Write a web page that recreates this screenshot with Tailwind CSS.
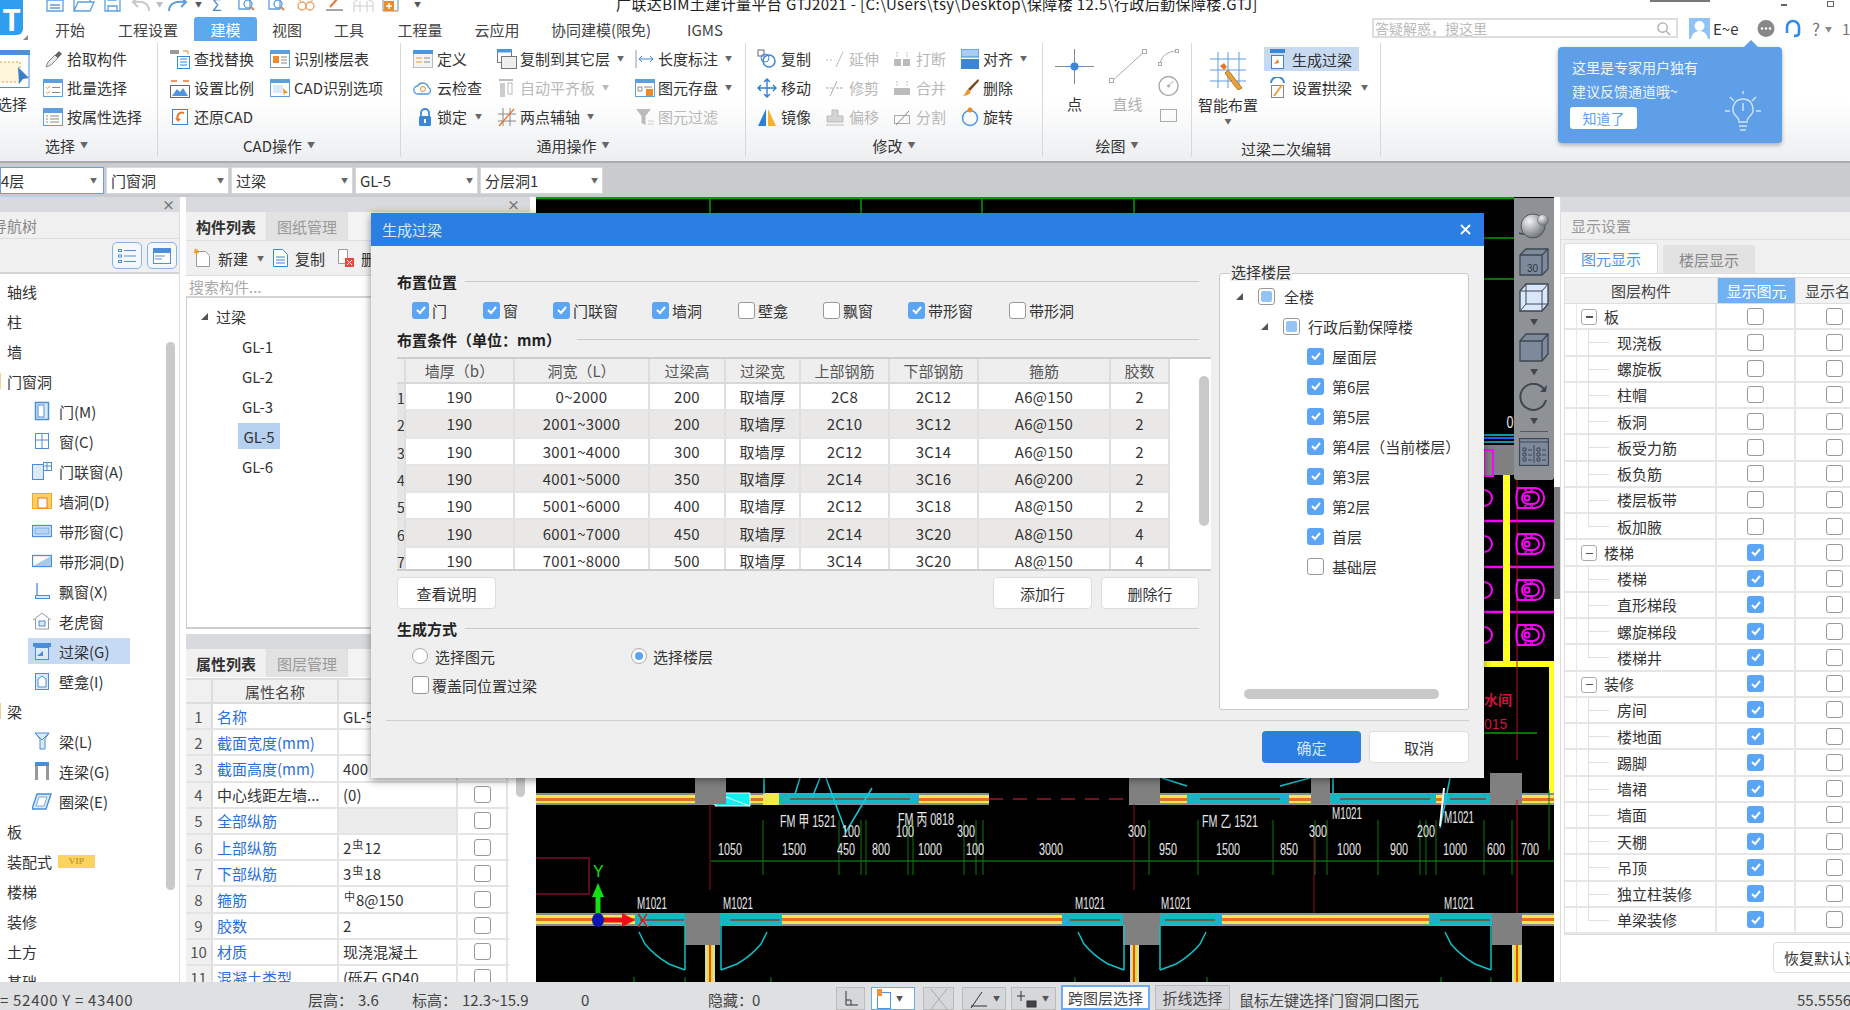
<!DOCTYPE html>
<html lang="zh-CN">
<head>
<meta charset="UTF-8">
<title>广联达BIM土建计量平台 GTJ2021</title>
<script src="https://cdn.jsdelivr.net/npm/@tailwindcss/browser@4"></script>
</head>
<body class="bg-white">
<div class="relative w-[1850px] h-[1010px] overflow-hidden flex flex-col text-[15px] leading-none text-[#333] font-['Noto_Sans_CJK_SC','Noto_Sans',sans-serif]">

  <!-- title bar, cut off at the top of the shot -->
  <div class="relative h-[17px] shrink-0 overflow-hidden bg-white">
    <div class="absolute left-[46px] -top-[4px] flex items-center whitespace-nowrap">
      <svg class="w-[18px] h-[16px]" viewBox="0 0 18 16" fill="none" stroke="#5c9ede" stroke-width="1.300"><path d="M1 0v15h16V0M1 4h16M4 9h10M4 12h10"/></svg>
      <svg class="w-[22px] h-[16px] ml-[9px]" viewBox="0 0 22 16" fill="none" stroke="#5c9ede" stroke-width="1.300"><path d="M1 15V1h6l2 2h8v3M1 15l4-9h16l-4 9z"/></svg>
      <svg class="w-[17px] h-[16px] ml-[9px]" viewBox="0 0 17 16" fill="none" stroke="#5c9ede" stroke-width="1.300"><path d="M1 0v15h15V3l-3-3M4 15v-5h9v5M4 0v4h8V0"/></svg>
      <svg class="w-[19px] h-[14px] ml-[10px]" viewBox="0 0 19 14" fill="none" stroke="#c8c8c8" stroke-width="2"><path d="M18 14C18 6 12 4 3 5M7 0L2 5l5 5"/></svg>
      <span class="text-[7px] text-[#bbb] ml-[6px]">▼</span>
      <svg class="w-[21px] h-[14px] ml-[5px]" viewBox="0 0 21 14" fill="none" stroke="#5c9ede" stroke-width="2"><path d="M1 14C1 6 8 4 17 5M13 0l5 5-5 5"/></svg>
      <span class="text-[7px] text-[#555] ml-[6px]">▼</span>
      <span class="ml-[10px] text-[16px] text-[#4a8ad0] w-[15px]">Σ</span>
      <svg class="w-[20px] h-[16px] ml-[10px]" viewBox="0 0 20 16" fill="none"><path d="M2 0v13h11V0" stroke="#5c9ede" stroke-width="1.300"/><circle cx="11" cy="8" r="4" stroke="#5c9ede" stroke-width="1.300"/><path d="M14 11l3 3" stroke="#e88040" stroke-width="2"/></svg>
      <svg class="w-[20px] h-[16px] ml-[10px]" viewBox="0 0 20 16" fill="none"><path d="M2 0v13h11V0" stroke="#5c9ede" stroke-width="1.300"/><circle cx="11" cy="8" r="4" stroke="#5c9ede" stroke-width="1.300"/><path d="M14 11l3 3" stroke="#e88040" stroke-width="2"/></svg>
      <svg class="w-[18px] h-[16px] ml-[10px]" viewBox="0 0 18 16" fill="none" stroke="#e8a060" stroke-width="1.300"><circle cx="5" cy="10" r="4"/><circle cx="13" cy="10" r="4"/><path d="M9 9h0M3 5V1M15 5V1"/></svg>
      <svg class="w-[17px] h-[16px] ml-[11px]" viewBox="0 0 17 16" fill="none"><path d="M4 11L13 1" stroke="#e8762a" stroke-width="2"/><path d="M0 14h17" stroke="#888" stroke-width="1.500"/></svg>
      <svg class="w-[21px] h-[15px] ml-[10px]" viewBox="0 0 21 15" fill="none" stroke="#ccc"><path d="M1 15V5l9-5 10 5v10M1 9h19M7 4v11M14 4v11"/></svg>
      <svg class="w-[17px] h-[16px] ml-[8px]" viewBox="0 0 17 16"><path d="M1 0v15h15V0" fill="#fff" stroke="#888"/><rect x="2" y="5" width="10" height="10" fill="#f08a28"/><path d="M7 7v6M4 10h6" stroke="#fff" stroke-width="1.500"/></svg>
      <span class="text-[7px] text-[#555] ml-[15px]">▼</span>
    </div>
    <div class="absolute left-[616px] -top-[4px] whitespace-nowrap text-[#222] tracking-[0.4px]">广联达BIM土建计量平台 GTJ2021 - [C:\Users\tsy\Desktop\保障楼 12.5\行政后勤保障楼.GTJ]</div>
    <div class="absolute left-[1650px] top-0 w-[60px] h-[2px] bg-[#777]"></div>
    <div class="absolute left-[1781px] top-[4px] w-[6px] h-[2px] bg-[#666]"></div>
    <div class="absolute left-[1827px] top-[1px] w-[7px] h-[6px] border border-[#666]"></div>
  </div>

  <!-- ribbon tabs -->
  <div class="relative h-[24px] shrink-0 flex items-stretch bg-white">
    <div class="w-[46px]"></div>
    <div class="w-[48px] flex items-center justify-center text-[#444]">开始</div>
    <div class="w-[100px] flex items-center justify-center text-[#444] translate-x-[4px]">工程设置</div>
    <div class="w-[63px] flex items-center justify-center bg-[#5ea8ee] rounded-t-[3px] text-white">建模</div>
    <div class="w-[60px] flex items-center justify-center text-[#444]">视图</div>
    <div class="w-[64px] flex items-center justify-center text-[#444]">工具</div>
    <div class="w-[78px] flex items-center justify-center text-[#444]">工程量</div>
    <div class="w-[76px] flex items-center justify-center text-[#444]">云应用</div>
    <div class="w-[132px] flex items-center justify-center text-[#444]">协同建模(限免)</div>
    <div class="w-[76px] flex items-center justify-center text-[#444]">IGMS</div>

    <div class="absolute left-[1372px] top-[1px] w-[306px] h-[20px] border-2 border-[#ddd] bg-white flex items-center pl-[1px] text-[14px] text-[#bbb]">答疑解惑，搜这里
      <svg class="absolute right-[5px] top-[1px] w-[15px] h-[15px]" viewBox="0 0 16 16" fill="none" stroke="#aaa" stroke-width="1.400"><circle cx="7" cy="7" r="5"/><path d="M11 11l4 4"/></svg>
    </div>
    <svg class="absolute left-[1689px] top-[1px] w-[21px] h-[21px]" viewBox="0 0 21 21"><rect width="21" height="21" fill="#8fc3f5"/><circle cx="10.500" cy="8" r="5" fill="#fff"/><path d="M2 21c1-6 5-8 8.500-8s7.500 2 8.500 8z" fill="#fff"/></svg>
    <div class="absolute left-[1713px] top-[4px] text-[#333]">E~e</div>
    <svg class="absolute left-[1757px] top-[3px] w-[18px] h-[18px]" viewBox="0 0 18 18"><circle cx="9" cy="8.500" r="8.500" fill="#888"/><circle cx="5" cy="8.500" r="1.200" fill="#fff"/><circle cx="9" cy="8.500" r="1.200" fill="#fff"/><circle cx="13" cy="8.500" r="1.200" fill="#fff"/></svg>
    <svg class="absolute left-[1784px] top-[2px] w-[18px] h-[20px]" viewBox="0 0 18 20" fill="none" stroke="#2d8cee" stroke-width="2.600"><path d="M3 14V8a6 6 0 0 1 12 0v6c0 2-2 3-5 3"/></svg>
    <div class="absolute left-[1812px] top-[3px] text-[#777] text-[17px]">?</div>
    <div class="absolute left-[1825px] top-[9px] text-[#888] text-[7px]">▼</div>
    <div class="absolute left-[1842px] top-[4px] text-[#777]">1</div>
  </div>

  <!-- ribbon -->
  <div class="h-[122px] shrink-0 flex border-b-2 border-[#a9abad] bg-gradient-to-b from-white via-white to-[#eceef0]">

    <div class="w-[158px] flex flex-col border-r border-[#d8d8d8] mb-[4px] mt-[2px]">
      <div class="h-[90px] pt-[1px] flex">
        <div class="w-[43px] flex flex-col">
          <svg class="w-[30px] h-[38px] mt-[6px]" viewBox="0 0 30 38"><rect x="-3" y="0.500" width="32" height="37" fill="#fff" stroke="#4a90dc"/><rect x="-3" y="0" width="33" height="5" fill="#4a90dc"/><path d="M0 12h20v20H0" fill="#fff6dc" stroke="#f0a020" stroke-dasharray="2 2"/><path d="M18 17l11 11-6 1-4 5z" fill="#3c7fc8"/></svg>
          <div class="mt-[8px] -ml-[3px] whitespace-nowrap">选择</div>
        </div>
        <div class="flex flex-col">
          <div class="flex items-center h-[29px] gap-[4px]"><svg class="w-5 h-5" viewBox="0 0 20 20"><path d="M3 18l2-5 7-7 3 3-7 7z" fill="#e8e8e8" stroke="#888"/><path d="M12 6l4-4 3 3-4 4z" fill="#666"/></svg>拾取构件</div>
          <div class="flex items-center h-[29px] gap-[4px]"><svg class="w-5 h-5" viewBox="0 0 20 20"><rect x="0.500" y="1.500" width="19" height="17" fill="#fff" stroke="#5c9ede"/><rect y="1" width="20" height="4" fill="#5c9ede"/><path d="M3 9l1.500 1.500L7 8M3 14l1.500 1.500L7 13" fill="none" stroke="#e99a2a"/><path d="M9 9.500h8M9 14.500h8" stroke="#888"/></svg>批量选择</div>
          <div class="flex items-center h-[29px] gap-[4px]"><svg class="w-5 h-5" viewBox="0 0 20 20"><rect x="0.500" y="1.500" width="19" height="17" fill="#fff" stroke="#5c9ede"/><rect y="1" width="20" height="5" fill="#5c9ede"/><path d="M3 9h2M7 9h9M3 12h2M7 12h9M3 15h2M7 15h9" stroke="#888"/></svg>按属性选择</div>
        </div>
      </div>
      <div class="flex-1 flex items-center justify-center gap-[5px] -translate-x-[12px]">选择<span class="text-[8px] text-[#666]">▼</span></div>
    </div>

    <div class="w-[243px] flex flex-col border-r border-[#d8d8d8] mb-[4px] mt-[2px]">
      <div class="h-[90px] pt-[1px] pl-[12px] flex">
        <div class="w-[100px] flex flex-col">
          <div class="flex items-center h-[29px] gap-[4px]"><svg class="w-5 h-5" viewBox="0 0 20 20"><rect y="1" width="9" height="4" fill="#999"/><rect x="7.500" y="7.500" width="12" height="12" fill="#fff" stroke="#3c86d6"/><path d="M10 10h7M10 13h7M10 16h7" stroke="#3c86d6"/><path d="M13 2h5v3" fill="none" stroke="#e8862a"/></svg>查找替换</div>
          <div class="flex items-center h-[29px] gap-[4px]"><svg class="w-5 h-5" viewBox="0 0 20 20"><path d="M1 3h6M13 3h6" stroke="#e8762a" stroke-width="1.500"/><rect x="0.500" y="7.500" width="19" height="12" fill="#fff" stroke="#666"/><path d="M2 18l5-7 3 3 3-4 5 8z" fill="#4c94dc"/></svg>设置比例</div>
          <div class="flex items-center h-[29px] gap-[4px]"><svg class="w-5 h-5" viewBox="0 0 20 20"><rect x="2.500" y="2.500" width="15" height="15" fill="#fff" stroke="#3c86d6"/><path d="M14 6c-4-2-8 2-6 7" fill="none" stroke="#e8762a" stroke-width="2"/><path d="M5 11l3 4 3-3z" fill="#e8762a"/></svg>还原CAD</div>
        </div>
        <div class="flex flex-col">
          <div class="flex items-center h-[29px] gap-[4px]"><svg class="w-5 h-5" viewBox="0 0 20 20"><rect x="0.500" y="1.500" width="19" height="17" fill="#fff" stroke="#5c9ede"/><rect y="1" width="20" height="4" fill="#5c9ede"/><rect x="3" y="7" width="6" height="7" fill="#f08a28"/><path d="M11 8h6M11 11h6M11 14h6" stroke="#888"/></svg>识别楼层表</div>
          <div class="flex items-center h-[29px] gap-[4px]"><svg class="w-5 h-5" viewBox="0 0 20 20"><rect x="0.500" y="1.500" width="19" height="17" fill="#fff" stroke="#5c9ede"/><rect y="1" width="20" height="4" fill="#5c9ede"/><rect x="3" y="7" width="10" height="8" fill="#dce9f8"/><path d="M13 10l5 5-3 0-1 3z" fill="#f08a28"/></svg>CAD识别选项</div>
        </div>
      </div>
      <div class="flex-1 flex items-center justify-center gap-[5px]">CAD操作<span class="text-[8px] text-[#666]">▼</span></div>
    </div>

    <div class="w-[345px] flex flex-col border-r border-[#d8d8d8] mb-[4px] mt-[2px]">
      <div class="h-[90px] pt-[1px] pl-[12px] flex">
        <div class="w-[84px] flex flex-col">
          <div class="flex items-center h-[29px] gap-[4px]"><svg class="w-5 h-5" viewBox="0 0 20 20"><rect x="0.500" y="1.500" width="19" height="17" fill="#f4f4f4" stroke="#bbb"/><rect y="1" width="20" height="4" fill="#4a96e0"/><path d="M3 9h6M3 13h6" stroke="#e8a040"/><path d="M11 9h6M11 13h6" stroke="#888"/></svg>定义</div>
          <div class="flex items-center h-[29px] gap-[4px]"><svg class="w-5 h-5" viewBox="0 0 20 20"><path d="M5 16a4 4 0 0 1-.5-8 6 6 0 0 1 11 1.500A3.500 3.500 0 0 1 15 16z" fill="#fff" stroke="#4a96e0" stroke-width="1.300"/><circle cx="10" cy="11" r="2.500" fill="none" stroke="#e8862a"/></svg>云检查</div>
          <div class="flex items-center h-[29px] gap-[4px]"><svg class="w-5 h-5 ml-[2px]" viewBox="0 0 20 20"><path d="M6 9V6a4 4 0 0 1 8 0v3" fill="none" stroke="#3c86d6" stroke-width="1.800"/><rect x="4" y="9" width="12" height="10" rx="1.500" fill="#3c86d6"/><rect x="9" y="12" width="2" height="4" fill="#fff"/></svg><span class="-ml-[2px]">锁定</span><span class="text-[7px] text-[#666] ml-[4px]">▼</span></div>
        </div>
        <div class="w-[138px] flex flex-col">
          <div class="flex items-center h-[29px] gap-[3px]"><svg class="w-5 h-5" viewBox="0 0 20 20"><rect x="0.500" y="0.500" width="14" height="13" fill="#fff" stroke="#777"/><rect width="15" height="3.500" fill="#4a96e0"/><rect x="4.500" y="7.500" width="15" height="12" fill="#eee" stroke="#777"/></svg>复制到其它层<span class="text-[7px] text-[#666] ml-[4px]">▼</span></div>
          <div class="flex items-center h-[29px] gap-[3px] text-[#b8b8b8]"><svg class="w-5 h-5" viewBox="0 0 20 20"><path d="M2 2h14" stroke="#bbb" stroke-width="2"/><rect x="3" y="5" width="5" height="14" fill="#ccc"/><rect x="11" y="5" width="4" height="11" fill="none" stroke="#bbb"/></svg>自动平齐板<span class="text-[7px] ml-[4px]">▼</span></div>
          <div class="flex items-center h-[29px] gap-[3px]"><svg class="w-5 h-5" viewBox="0 0 20 20" fill="none"><path d="M6 1v18M13 1v18M1 7h18M1 14h18" stroke="#888"/><path d="M2 19L17 2" stroke="#e8762a" stroke-width="1.300"/></svg>两点辅轴<span class="text-[7px] text-[#666] ml-[4px]">▼</span></div>
        </div>
        <div class="flex flex-col">
          <div class="flex items-center h-[29px] gap-[3px]"><svg class="w-5 h-5" viewBox="0 0 20 20" fill="none"><path d="M1 1v18" stroke="#999"/><path d="M5 10h12" stroke="#3c86d6"/><path d="M7 7l-3 3 3 3M15 7l3 3-3 3" stroke="#3c86d6"/></svg>长度标注<span class="text-[7px] text-[#666] ml-[4px]">▼</span></div>
          <div class="flex items-center h-[29px] gap-[3px]"><svg class="w-5 h-5" viewBox="0 0 20 20"><rect x="0.500" y="1.500" width="19" height="17" fill="#fff" stroke="#5c9ede"/><rect y="1" width="20" height="4" fill="#5c9ede"/><path d="M3 9h4v4H3zM9 9h8" fill="none" stroke="#888"/><rect x="11" y="11" width="7" height="7" fill="#f08a28"/></svg>图元存盘<span class="text-[7px] text-[#666] ml-[4px]">▼</span></div>
          <div class="flex items-center h-[29px] gap-[3px] text-[#b8b8b8]"><svg class="w-5 h-5" viewBox="0 0 20 20"><path d="M1 2h15l-5.500 7v9l-4-2V9z" fill="#bbb"/><path d="M13 14h6M13 17h6" stroke="#ccc"/></svg>图元过滤</div>
        </div>
      </div>
      <div class="flex-1 flex items-center justify-center gap-[5px]">通用操作<span class="text-[8px] text-[#666]">▼</span></div>
    </div>

    <div class="w-[297px] flex flex-col border-r border-[#d8d8d8] mb-[4px] mt-[2px]">
      <div class="h-[90px] pt-[1px] pl-[11px] flex">
        <div class="w-[68px] flex flex-col">
          <div class="flex items-center h-[29px] gap-[4px]"><svg class="w-5 h-5" viewBox="0 0 20 20" fill="none"><rect x="1" y="1" width="6" height="6" stroke="#666"/><circle cx="12" cy="12" r="6" stroke="#3c86d6" stroke-width="1.500"/><circle cx="8" cy="9" r="4" stroke="#3c86d6"/></svg>复制</div>
          <div class="flex items-center h-[29px] gap-[4px]"><svg class="w-5 h-5" viewBox="0 0 20 20" fill="none" stroke="#2f7fd4" stroke-width="1.400"><path d="M10 1v18M1 10h18M7 4l3-3 3 3M7 16l3 3 3-3M4 7l-3 3 3 3M16 7l3 3-3 3"/></svg>移动</div>
          <div class="flex items-center h-[29px] gap-[4px]"><svg class="w-5 h-5" viewBox="0 0 20 20"><path d="M9 2v17H1z" fill="#2f7fd4"/><path d="M11 2v17h8z" fill="#f5b12e"/></svg>镜像</div>
        </div>
        <div class="w-[67px] flex flex-col text-[#b8b8b8]">
          <div class="flex items-center h-[29px] gap-[4px]"><svg class="w-5 h-5" viewBox="0 0 20 20" fill="none" stroke="#bbb"><path d="M1 11h9" stroke-dasharray="2 2"/><path d="M11 18L18 3"/></svg>延伸</div>
          <div class="flex items-center h-[29px] gap-[4px]"><svg class="w-5 h-5" viewBox="0 0 20 20" fill="none" stroke="#aaa"><path d="M1 10h7M11 10h8" stroke-dasharray="3 1"/><path d="M5 18L12 3"/></svg>修剪</div>
          <div class="flex items-center h-[29px] gap-[4px]"><svg class="w-5 h-5" viewBox="0 0 20 20" fill="#d4d4d4" stroke="#bbb"><path d="M7 3h6v6h5v6H2V9h5z"/><path d="M1 18h18" fill="none"/></svg>偏移</div>
        </div>
        <div class="w-[69px] flex flex-col text-[#b8b8b8]">
          <div class="flex items-center h-[29px] gap-[4px]"><svg class="w-5 h-5" viewBox="0 0 20 20" fill="#bbb"><rect x="2" y="10" width="7" height="7"/><rect x="11" y="10" width="7" height="7"/><path d="M5 3v5M15 3v5" stroke="#bbb" stroke-dasharray="2 1"/></svg>打断</div>
          <div class="flex items-center h-[29px] gap-[4px]"><svg class="w-5 h-5" viewBox="0 0 20 20" fill="#bbb"><rect x="2" y="10" width="16" height="7"/><path d="M5 3v5M15 3v5" stroke="#bbb" stroke-dasharray="2 1"/></svg>合并</div>
          <div class="flex items-center h-[29px] gap-[4px]"><svg class="w-5 h-5" viewBox="0 0 20 20" fill="none" stroke="#aaa"><rect x="2.500" y="8.500" width="15" height="8"/><path d="M4 18L17 4" stroke="#888"/></svg>分割</div>
        </div>
        <div class="flex flex-col">
          <div class="flex items-center h-[29px] gap-[4px]"><svg class="w-[18px] h-5" viewBox="0 0 18 20"><rect width="18" height="8" fill="#a8cdf2" stroke="#3c86d6"/><rect y="10" width="18" height="10" fill="#3c86d6"/></svg>对齐<span class="text-[7px] text-[#666] ml-[3px]">▼</span></div>
          <div class="flex items-center h-[29px] gap-[4px]"><svg class="w-[18px] h-5" viewBox="0 0 18 20"><path d="M17 1L7 11l2 2L18 3z" fill="#7a4a1e"/><path d="M1 18c3 0 3-4 6-7l3 3c-2 3-5 4-9 4z" fill="#e89a30"/></svg>删除</div>
          <div class="flex items-center h-[29px] gap-[4px]"><svg class="w-[18px] h-5" viewBox="0 0 18 20" fill="none"><circle cx="9" cy="11" r="7.500" stroke="#4a96e0" stroke-width="1.500"/><circle cx="9" cy="3" r="2.500" fill="#f08a28"/></svg>旋转</div>
        </div>
      </div>
      <div class="flex-1 flex items-center justify-center gap-[5px]">修改<span class="text-[8px] text-[#666]">▼</span></div>
    </div>

    <div class="w-[149px] flex flex-col border-r border-[#d8d8d8] mb-[4px] mt-[2px]">
      <div class="h-[90px] pt-[6px] pl-[12px] flex">
        <div class="w-[53px] flex flex-col items-start">
          <svg class="w-[39px] h-[35px]" viewBox="0 0 39 35" fill="none"><path d="M0 17.500h39M19.500 0v35" stroke="#888"/><path d="M10 17.500h19" stroke="#4a96e0"/><circle cx="19.500" cy="17.500" r="4" fill="#3c86d6"/></svg>
          <div class="w-[39px] text-center mt-[12px]">点</div>
        </div>
        <div class="w-[50px] flex flex-col items-start">
          <svg class="w-[39px] h-[35px]" viewBox="0 0 39 35" fill="none" stroke="#aaa"><path d="M4 32L36 3"/><rect x="1.500" y="29.500" width="4" height="4" fill="#fff"/><rect x="34.500" y="0.500" width="4" height="4" fill="#fff"/></svg>
          <div class="w-[39px] text-center mt-[12px] text-[#b0b0b0]">直线</div>
        </div>
        <div class="flex flex-col items-center">
          <svg class="w-[21px] h-[17px]" viewBox="0 0 21 17" fill="none" stroke="#aaa"><path d="M2 15C3 7 10 2 19 2"/><rect x="0.500" y="13.500" width="3" height="3" fill="#fff"/><rect x="17.500" y="0.500" width="3" height="3" fill="#fff"/></svg>
          <svg class="w-[21px] h-[22px] mt-[9px]" viewBox="0 0 21 22" fill="none" stroke="#aaa"><circle cx="10.500" cy="11" r="9.500" stroke-width="1.400"/><path d="M10.500 11l5-5"/><circle cx="10.500" cy="11" r="1" fill="#aaa"/></svg>
          <svg class="w-[21px] h-[17px] mt-[10px]" viewBox="0 0 21 17" fill="none" stroke="#aaa"><rect x="2.500" y="2.500" width="16" height="12"/></svg>
        </div>
      </div>
      <div class="flex-1 flex items-center justify-center gap-[5px]">绘图<span class="text-[8px] text-[#666]">▼</span></div>
    </div>

    <div class="w-[189px] flex flex-col border-r border-[#d8d8d8] mb-[4px] mt-[2px]">
      <div class="h-[90px] pt-[4px] flex">
        <div class="w-[72px] flex flex-col items-center">
          <svg class="w-[40px] h-[40px] mt-[3px]" viewBox="0 0 40 40" fill="none"><path d="M2 9h36M2 20h36M2 31h36M10 2v36M20 2v36M31 2v36" stroke="#5c9ede"/><path d="M20 20l14 18-4 2-13-17z" fill="#e8a23c" stroke="#b8741c"/><path d="M12 16l4-3 3 4-3 3z" fill="#e8762a"/></svg>
          <div class="mt-[7px] whitespace-nowrap">智能布置</div>
          <div class="text-[7px] text-[#666] mt-[6px]">▼</div>
        </div>
        <div class="flex flex-col">
          <div class="flex items-center w-[95px] h-[24px] bg-[#c8daf2] pl-[6px] gap-[7px]"><svg class="w-[15px] h-[20px]" viewBox="0 0 15 20"><rect width="15" height="4" fill="#3c86d6"/><rect x="1.500" y="6.500" width="12" height="13" fill="#fff" stroke="#3c86d6"/><path d="M4 15l4-5 1 4z" fill="#e8862a"/></svg>生成过梁</div>
          <div class="flex items-center h-[29px] pl-[6px] gap-[7px] mt-[2px]"><svg class="w-[15px] h-[22px]" viewBox="0 0 15 22" fill="none"><path d="M1 6a6.500 6 0 0 1 13 0" stroke="#3c86d6" stroke-width="2"/><rect x="1.500" y="8.500" width="12" height="12" fill="#fff" stroke="#888"/><path d="M4 19L12 8" stroke="#e8a23c" stroke-width="2"/></svg>设置拱梁<span class="text-[7px] text-[#666] ml-[2px]">▼</span></div>
        </div>
      </div>
      <div class="flex-1 flex items-center justify-center pt-[6px]">过梁二次编辑</div>
    </div>
  </div>

  <!-- combo strip -->
  <div class="h-[34px] shrink-0 bg-[#c9cbce] flex items-center gap-[2px]">
    <div class="w-[104px] h-[27px] bg-white border border-[#6a9fdd] flex items-center pr-[6px] justify-between">4层<span class="text-[7px] text-[#666]">▼</span></div>
    <div class="w-[123px] h-[27px] bg-white border border-[#d8d8d8] flex items-center px-[4px] justify-between">门窗洞<span class="text-[7px] text-[#666]">▼</span></div>
    <div class="w-[122px] h-[27px] bg-white border border-[#d8d8d8] flex items-center px-[4px] justify-between">过梁<span class="text-[7px] text-[#666]">▼</span></div>
    <div class="w-[123px] h-[27px] bg-white border border-[#d8d8d8] flex items-center px-[4px] justify-between">GL-5<span class="text-[7px] text-[#666]">▼</span></div>
    <div class="w-[123px] h-[27px] bg-white border border-[#d8d8d8] flex items-center px-[4px] justify-between">分层洞1<span class="text-[7px] text-[#666]">▼</span></div>
  </div>

  <!-- main area -->
  <div class="relative h-[785px] shrink-0 flex bg-white overflow-hidden">

    <!-- left: navigation tree -->
    <div class="relative w-[180px] shrink-0 flex flex-col border-r border-[#ddd]">
      <div class="h-[15px] bg-[#d9dadd] flex items-center justify-end pr-[4px] text-[#777] text-[13px] font-bold">×</div>
      <div class="h-[27px] bg-[#f0f0f0] flex items-center border-b border-[#ddd] -indent-[8px] text-[#888]">导航树</div>
      <div class="h-[35px] bg-[#f0f0f0] border-b-2 border-[#d4d4d4] flex items-center justify-end gap-[5px] pr-[2px]">
        <div class="w-[30px] h-[27px] rounded-[5px] border border-[#7fb5ee] bg-[#f4f8fd] flex items-center justify-center"><svg class="w-[18px] h-[16px]" viewBox="0 0 18 16" fill="none" stroke="#5590cc"><rect x="0.500" y="1.500" width="3" height="2"/><rect x="0.500" y="7" width="3" height="2"/><rect x="0.500" y="12.500" width="3" height="2"/><path d="M6 2.500h12M6 8h12M6 13.500h12"/></svg></div>
        <div class="w-[30px] h-[27px] rounded-[5px] border border-[#7fb5ee] bg-[#f4f8fd] flex items-center justify-center"><svg class="w-[18px] h-[16px]" viewBox="0 0 18 16"><rect x="0.500" y="0.500" width="17" height="15" fill="#fff" stroke="#5590cc"/><rect width="18" height="5" fill="#4a8fd8"/><path d="M2 8h10M2 11h7" stroke="#5590cc"/></svg></div>
      </div>
      <div id="navList" class="pt-[2px] flex-1 overflow-hidden"></div>
      <div class="absolute left-[166px] top-[145px] w-[9px] h-[548px] rounded-full bg-[#c9c9c9]"></div>
    </div>
    <div class="w-[6px] shrink-0"></div>

    <!-- middle: component list + properties -->
    <div class="relative w-[344px] shrink-0 flex flex-col">
      <div class="h-[15px] bg-[#d9dadd] flex items-center justify-end pr-[10px] text-[#777] text-[13px] font-bold">×</div>
      <div class="h-[28px] bg-[#f4f4f4] flex">
        <div class="w-[81px] bg-[#f0f0f0] flex items-center justify-center font-bold text-[#333] border-r border-[#ddd]">构件列表</div>
        <div class="w-[81px] bg-[#e2e2e2] flex items-center justify-center text-[#999] border-r border-[#ddd]">图纸管理</div>
      </div>
      <div class="h-[35px] bg-[#f0f0f0] border-t border-[#ddd] flex items-center pl-[8px] whitespace-nowrap">
        <svg class="w-[18px] h-[20px]" viewBox="0 0 18 20"><path d="M2.500 3.500h9l4 4v11h-13z" fill="#fff" stroke="#999"/><path d="M1 0l1.500 2 2-1-1 2.500 2 1.500-2.500.5L3 8 2 5.500 0 5z" fill="#f0a020"/></svg>
        <span class="ml-[6px]">新建</span><span class="text-[7px] text-[#666] ml-[9px]">▼</span>
        <svg class="w-[17px] h-[20px] ml-[8px]" viewBox="0 0 17 20" fill="none" stroke="#3c86d6"><path d="M1.500 1.500h9l5 5v12h-14z" fill="#fff"/><path d="M4 9h9M4 12h9M4 15h9"/></svg>
        <span class="ml-[6px]">复制</span>
        <svg class="w-[18px] h-[20px] ml-[12px]" viewBox="0 0 18 20"><path d="M1.500 1.500h9v14h-9z" fill="#fff" stroke="#999"/><rect x="8" y="10" width="9" height="9" fill="#e84a3c"/><path d="M10 12l5 5M15 12l-5 5" stroke="#fff"/></svg>
        <span class="ml-[6px]">删除</span>
      </div>
      <div class="h-[23px] bg-white border-t border-[#ddd] border-b-2 border-b-[#d4d4d4] flex items-center pl-[3px] text-[#aaa]">搜索构件...</div>
      <div class="h-[331px] border-b-2 border-[#ccc] border-l border-l-[#ccc]">
        <div class="flex items-center h-[30px] mt-[3px] pl-[14px] text-[#333]"><span class="w-0 h-0 border-l-[7px] border-l-transparent border-b-[7px] border-b-[#555]"></span><span class="ml-[8px]">过梁</span></div>
        <div class="flex items-center h-[30px] pl-[55px]">GL-1</div>
        <div class="flex items-center h-[30px] pl-[55px]">GL-2</div>
        <div class="flex items-center h-[30px] pl-[55px]">GL-3</div>
        <div class="flex items-center h-[30px] pl-[51px]"><span class="w-[42px] h-[26px] bg-[#b6d0f0] flex items-center justify-center">GL-5</span></div>
        <div class="flex items-center h-[30px] pl-[55px]">GL-6</div>
      </div>
      <div class="h-[5px]"></div>
      <div class="h-[15px] bg-[#d9dadd]"></div>
      <div class="h-[28px] bg-[#f4f4f4] flex">
        <div class="w-[81px] bg-[#f0f0f0] flex items-center justify-center font-bold text-[#333] border-r border-[#ddd]">属性列表</div>
        <div class="w-[81px] bg-[#e2e2e2] flex items-center justify-center text-[#999] border-r border-[#ddd]">图层管理</div>
      </div>
      <div class="relative flex-1 overflow-hidden bg-white pt-[1px]">
        <div id="propTable" class="w-[323px]"></div>
        <div class="absolute left-[330px] -top-[2px] w-[9px] h-[122px] rounded-b-full bg-[#c9c9c9]"></div>
      </div>
    </div>
    <div class="w-[6px] shrink-0"></div>

    <!-- CAD canvas -->
    <div class="relative w-[1018px] shrink-0 bg-black">
      <svg id="cad" class="absolute inset-0 w-[1018px] h-[785px]" viewBox="536 197 1018 785" fill="none" font-family="Liberation Sans">
        <path d="M536 198h978" stroke="#0a9a0a" stroke-width="2.500"/>
        <path d="M710 198v15M861 198v15M982 198v15M1134 198v15M1484 238h30M1484 279h30" stroke="#0a9a0a" stroke-width="1.500"/>

        <!-- strip right of the dialog -->
        <path d="M1484 435h30" stroke="#19c8e0" stroke-width="1.500"/>
        <path d="M1484 438h30" stroke="#2060ff" stroke-width="2"/>
        <path d="M1484 442h30" stroke="#19c8e0" stroke-width="1.500"/>
        <rect x="1484" y="445" width="30" height="30" fill="#808080"/>
        <rect x="1484" y="450" width="9" height="26" stroke="#ff00ff" stroke-width="2"/>
        <rect x="1503" y="475" width="7" height="186" fill="#ffff20"/>
        <rect x="1484" y="661" width="71" height="6" fill="#ffff20"/>
        <rect x="1549" y="661" width="6" height="132" fill="#ffff20"/>
        <path d="M1484 521h19M1510 521h44M1484 567h19M1510 567h44M1484 612h19M1510 612h44" stroke="#ff00ff" stroke-width="2.500"/>
        <path d="M1517 476v284" stroke="#b01020"/>
        <g stroke="#ff00ff" stroke-width="2">
          <g id="sym"><path d="M1518 488h16c7 0 10 5 10 10s-3 10-10 10h-16c-2-6-2-14 0-20z"/><rect x="1522" y="492" width="17" height="12" rx="6"/><circle cx="1527" cy="498" r="2.500"/><path d="M1524 490h3M1530 490h3M1524 506h3M1530 506h3" stroke-width="1.500"/></g>
          <use href="#sym" y="46"/><use href="#sym" y="92"/><use href="#sym" y="137"/>
          <path d="M1484 490a8 8 0 0 1 0 16M1484 536a8 8 0 0 1 0 16M1484 582a8 8 0 0 1 0 16M1484 627a8 8 0 0 1 0 16"/>
        </g>
        <text x="1484" y="705" fill="#d0143c" font-size="14" font-weight="bold" font-family="Noto Sans CJK SC">水间</text>
        <text x="1484" y="729" fill="#d0143c" font-size="14">015</text>
        <path d="M1484 733h53" stroke="#0a9a0a" stroke-width="1.500"/>

        <!-- upper wall -->
        <rect x="536" y="793" width="1018" height="12" fill="#8c8c8c"/>
        <rect x="536" y="795" width="1018" height="8" fill="#f6e650"/>
        <rect x="536" y="798" width="1018" height="3" fill="#e8701c"/>
        <rect x="989" y="793" width="140" height="12" fill="#000"/>
        <path d="M989 799h140" stroke="#7a1020" stroke-width="2" stroke-dasharray="14 10"/>
        <rect x="763" y="793" width="16" height="12" fill="#f6e650"/>
        <rect x="779" y="794" width="140" height="10" fill="#14b8c4"/>
        <rect x="1187" y="794" width="102" height="10" fill="#14b8c4"/>
        <rect x="1330" y="794" width="106" height="10" fill="#14b8c4"/>
        <rect x="1442" y="794" width="48" height="10" fill="#14b8c4"/>
        <path d="M790 799h120M1200 799h80M1340 799h90M1450 799h36" stroke="#606060" stroke-width="2"/>
        <rect x="715" y="793" width="35" height="13" fill="#10f0f0"/>
        <path d="M715 806V793h35v13zM715 793l35 13" stroke="#e0ffff"/>
        <rect x="695" y="778" width="31" height="26" fill="#808080"/>
        <rect x="1129" y="778" width="31" height="26" fill="#808080"/>
        <rect x="1311" y="778" width="19" height="26" fill="#808080"/>
        <rect x="1490" y="773" width="32" height="31" fill="#808080"/>
        <path d="M764 778v16M800 778l-5 16M820 778l-8 20M826 778l20 54 26-44M1162 778l25 8M1280 786l30-8M1333 778v16M1450 778l-10 50" stroke="#14c8d8" stroke-width="1.500"/>
        <path d="M1444 788l-4 38" stroke="#fff" stroke-width="2"/>

        <!-- dimension line -->
        <path d="M711 861h843" stroke="#0b6a0b" stroke-width="1.500"/>
        <path id="ticks" stroke="#0c7a0c" d="M763 820v55M839 820v55M861 820v55M866 820v55M908 820v55M913 820v55M964 820v55M976 820v55M983 820v55M1149 820v55M1198 820v55M1273 820v55M1315 820v55M1327 820v55M1378 820v55M1420 820v55M1426 820v55M1436 820v55M1484 820v55M1512 820v55M1549 790v60"/>
        <path d="M710 804v86M1134 804v86M1314 830v90" stroke="#8a1020"/>
        <path d="M1517 800v190" stroke="#b01020"/>
        <rect x="535" y="858" width="54" height="36" stroke="#7a1030" stroke-width="1.500"/>

        <!-- lower wall -->
        <rect x="536" y="913" width="1018" height="13" fill="#8c8c8c"/>
        <rect x="536" y="915" width="1018" height="9" fill="#f6e650"/>
        <rect x="536" y="918" width="1018" height="3" fill="#e8701c"/>
        <g fill="#14b8c4"><rect x="635" y="914" width="50" height="11"/><rect x="720" y="914" width="62" height="11"/><rect x="1062" y="914" width="61" height="11"/><rect x="1160" y="914" width="62" height="11"/><rect x="1429" y="914" width="63" height="11"/></g>
        <path d="M640 920h44M730 920h50M1070 920h50M1165 920h50M1440 920h50" stroke="#606060" stroke-width="2"/>
        <rect x="685" y="913" width="35" height="32" fill="#808080"/>
        <rect x="1123" y="913" width="37" height="32" fill="#808080"/>
        <rect x="1492" y="913" width="30" height="32" fill="#808080"/>
        <g fill="#d8d8c0"><rect x="705" y="945" width="10" height="37"/><rect x="1130" y="945" width="9" height="37"/><rect x="1512" y="945" width="10" height="37"/></g>
        <g fill="#f0e020"><rect x="707" y="945" width="6" height="37"/><rect x="1132" y="945" width="5" height="37"/><rect x="1514" y="945" width="6" height="37"/></g>
        <path d="M710 945v37M1134 945v37M1517 945v37" stroke="#e01818" stroke-width="1.500"/>
        <g stroke="#12c0c8" stroke-width="1.500">
          <path d="M685 925v45M685 970l-16-6q-14-8-24-20l-6-12"/>
          <path d="M721 925v45M721 970l16-6q14-8 24-20l6-12"/>
          <path d="M1124 925v45M1124 970l-16-6q-14-8-24-20l-6-12"/>
          <path d="M1160 925v45M1160 970l16-6q14-8 24-20l6-12"/>
          <path d="M1491 925v45M1491 970l-16-6q-14-8-24-20l-6-12"/>
        </g>
        <path d="M634 977v5M685 977v5M771 977v5M1075 977v5M1207 977v5M1441 977v5M1491 977v5" stroke="#0c8a0c"/>

        <!-- axes -->
        <path d="M598 920V896" stroke="#12e012" stroke-width="5"/><path d="M592 897l6-14 6 14z" fill="#12e012"/>
        <path d="M598 920h26" stroke="#f01010" stroke-width="5"/><path d="M622 913l13 7-13 7z" fill="#f01010"/>
        <ellipse cx="598" cy="920" rx="6" ry="7" fill="#0a18b0"/>
        <text x="593" y="877" fill="#12e012" font-size="16">Y</text>
        <text x="637" y="927" fill="#f01010" font-size="18" stroke="none">X</text>
        <g id="cadText" fill="#e8e8e8" stroke="none"></g>
      </svg>
      <!-- view tool palette -->
      <div class="absolute left-[978px] top-[1px] w-[40px] h-[282px] bg-[#8e9195] rounded-b-[3px] flex flex-col items-center pt-[14px]">
        <svg class="w-[30px] h-[28px]" viewBox="0 0 30 28"><defs><radialGradient id="ball" cx="35%" cy="30%" r="75%"><stop offset="0" stop-color="#f2f4f6"/><stop offset="1" stop-color="#6a7078"/></radialGradient></defs><path d="M0 21c6 3 16-1 24-9" fill="none" stroke="#3e4650" stroke-width="1.500"/><circle cx="14" cy="14" r="12" fill="url(#ball)" stroke="#555"/><circle cx="24" cy="8" r="5.500" fill="url(#ball)" stroke="#666" stroke-width=".5"/></svg>
        <svg class="w-[30px] h-[28px] mt-[8px]" viewBox="0 0 30 28"><path d="M1 7l6-6h22v20l-6 6H1z" fill="#7c8a9c" stroke="#3e4650" stroke-width="1.300"/><path d="M1 7h22v20M23 7l6-6" fill="none" stroke="#3e4650" stroke-width="1.300"/><text x="8" y="24" font-size="10" fill="#2e3640" font-family="Liberation Sans">30</text></svg>
        <svg class="w-[30px] h-[29px] mt-[7px]" viewBox="0 0 30 29"><path d="M1 8l6-7h22v20l-6 7H1z" fill="#d8e8fa" stroke="#3e4650" stroke-width="1.300"/><path d="M7 1v20h22M7 21l-6 7M1 8h22v20M23 8l6-7" fill="none" stroke="#3e4650"/></svg>
        <span class="text-[8px] text-[#3e4650] mt-[6px]">▼</span>
        <svg class="w-[30px] h-[29px] mt-[7px]" viewBox="0 0 30 29"><path d="M1 8l6-7h22v20l-6 7H1z" fill="#7c8a9c" stroke="#3e4650" stroke-width="1.300"/><path d="M1 8h22v20M23 8l6-7" fill="none" stroke="#3e4650" stroke-width="1.300"/></svg>
        <span class="text-[8px] text-[#3e4650] mt-[6px]">▼</span>
        <svg class="w-[30px] h-[28px] mt-[7px]" viewBox="0 0 30 28" fill="none" stroke="#3e4650" stroke-width="2"><path d="M26 8A13 13 0 1 0 27 17"/><path d="M21 9l6 0 1-7z" fill="#3e4650" stroke="none"/></svg>
        <span class="text-[8px] text-[#3e4650] mt-[6px]">▼</span>
        <div class="w-[28px] h-px bg-[#55595e] mt-[6px]"></div>
        <svg class="w-[30px] h-[28px] mt-[6px]" viewBox="0 0 30 28" fill="none" stroke="#3e4650"><rect x="0.500" y="0.500" width="29" height="27" fill="#7c8a9c" stroke-width="1.300"/><path d="M0 4h30M15 7v18M4 10h3v3H4zM4 15h3v3H4zM4 20h3v3H4zM18 10h3v3h-3zM18 15h3v3h-3zM18 20h3v3h-3zM9 12h4M9 17h4M9 22h4M23 12h4M23 17h4M23 22h4"/></svg>
      </div>
    </div>
    <div class="relative w-[6px] shrink-0"><div class="absolute top-[290px] left-0 w-[6px] h-[112px] bg-[#7f8184]"></div></div>

    <!-- right: display settings -->
    <div class="relative w-[290px] shrink-0 flex flex-col border-l border-[#ddd]">
      <div class="h-[15px] bg-[#d9dadd]"></div>
      <div class="h-[28px] bg-[#f0f0f0] flex items-center pl-[10px] border-b border-[#ddd] text-[#999]">显示设置</div>
      <div class="h-[34px] bg-[#f0f0f0] flex items-end pl-[3px] gap-[5px] border-b border-[#ddd]">
        <div class="w-[94px] h-[30px] bg-white border border-[#ddd] border-b-0 rounded-t-[3px] flex items-center justify-center text-[#4a96e8]">图元显示</div>
        <div class="w-[92px] h-[28px] bg-[#e2e2e2] rounded-t-[3px] flex items-center justify-center text-[#888]">楼层显示</div>
      </div>
      <div class="pl-[3px] pt-[3px] bg-white">
        <div class="w-[290px] border border-[#ddd] border-r-0">
          <div class="grid grid-cols-[152px_79px_55px] h-[26px] bg-[#f2f2f2] border-b border-[#ddd]">
            <div class="flex items-center justify-center text-[#444]">图层构件</div>
            <div class="flex items-center justify-center bg-[#6fb1f3] text-white border-x border-[#ddd]">显示图元</div>
            <div class="flex items-center pl-[9px] whitespace-nowrap overflow-hidden text-[#444]">显示名称</div>
          </div>
          <div id="layerRows"></div>
        </div>
      </div>
      <div class="absolute left-[212px] top-[745px] w-[90px] h-[31px] rounded-[4px] border border-[#ddd] bg-white flex items-center pl-[10px] whitespace-nowrap overflow-hidden">恢复默认设置</div>
    </div>
  </div>

  <!-- status bar -->
  <div class="h-[28px] shrink-0 bg-[#dfe0e2] flex text-[#444] whitespace-nowrap">
    <div class="w-[308px] pt-[10px] overflow-hidden tracking-[0.7px]">= 52400 Y = 43400</div>
    <div class="w-[50px] pt-[10px]">层高：</div>
    <div class="w-[54px] pt-[10px]">3.6</div>
    <div class="w-[50px] pt-[10px]">标高：</div>
    <div class="w-[119px] pt-[10px]">12.3~15.9</div>
    <div class="w-[127px] pt-[10px]">0</div>
    <div class="w-[44px] pt-[10px]">隐藏：</div>
    <div class="w-[84px] pt-[10px]">0</div>
    <div class="w-[29px] h-[23px] mt-[5px] bg-[#d6d7da] border border-[#bbb] flex items-center justify-center"><svg class="w-[14px] h-[16px]" viewBox="0 0 14 16" fill="none" stroke="#333"><path d="M2 0v14h12M2 9h5v5"/></svg></div>
    <div class="w-[44px] h-[23px] mt-[5px] ml-[6px] bg-white border border-[#6eaaf0] flex items-center pl-[5px] gap-[5px]"><svg class="w-[14px] h-[20px]" viewBox="0 0 14 20"><rect x="0.500" y="3.500" width="13" height="16" fill="#fff" stroke="#4a96e0"/><rect width="5" height="7" fill="#f09038"/></svg><span class="text-[7px] text-[#555]">▼</span></div>
    <div class="w-[31px] h-[23px] mt-[5px] ml-[8px] bg-[#d6d7da] border border-[#bbb] flex items-center justify-center"><svg class="w-[20px] h-[20px]" viewBox="0 0 20 20" stroke="#aaa"><path d="M2 0l16 20M18 0L2 20"/></svg></div>
    <div class="w-[44px] h-[23px] mt-[5px] ml-[8px] bg-[#d6d7da] border border-[#bbb] flex items-center pl-[5px] gap-[5px]"><svg class="w-[20px] h-[18px]" viewBox="0 0 20 18" fill="none" stroke="#333"><path d="M3 18L14 2M3 16h16"/></svg><span class="text-[7px] text-[#555]">▼</span></div>
    <div class="w-[45px] h-[23px] mt-[5px] ml-[5px] bg-[#d6d7da] border border-[#bbb] flex items-center pl-[5px] gap-[5px]"><svg class="w-[20px] h-[18px]" viewBox="0 0 20 18" fill="none" stroke="#333"><path d="M4 1v10M0 6h8"/><rect x="10" y="11" width="9" height="6" fill="#444"/></svg><span class="text-[7px] text-[#555]">▼</span></div>
    <div class="w-[89px] h-[25px] mt-[3px] ml-[5px] bg-white border-2 border-[#6eaaf0] flex items-center justify-center">跨图层选择</div>
    <div class="w-[75px] h-[25px] mt-[3px] ml-[5px] bg-[#d6d7da] border border-[#bbb] flex items-center justify-center">折线选择</div>
    <div class="ml-[9px] pt-[10px]">鼠标左键选择门窗洞口图元</div>
    <div class="absolute left-[1797px] top-[992px]">55.5556</div>
  </div>

  <!-- hint bubble -->
  <div class="absolute left-[1558px] top-[47px] w-[224px] h-[96px] rounded-[4px] bg-[#5f9fe8] shadow-[0_2px_4px_rgba(0,0,0,0.3)] text-white text-[14px]">
    <div class="absolute left-[186px] -top-[7px] w-0 h-0 border-x-[7px] border-x-transparent border-b-[7px] border-b-[#5f9fe8]"></div>
    <div class="pl-[14px] pt-[13px] opacity-90">这里是专家用户独有</div>
    <div class="pl-[14px] pt-[10px] opacity-90">建议反馈通道哦~</div>
    <div class="ml-[12px] mt-[9px] w-[67px] h-[22px] rounded-[3px] bg-white text-[#5f9fe8] flex items-center justify-center">知道了</div>
    <svg class="absolute left-[165px] top-[44px] w-[40px] h-[44px]" viewBox="0 0 40 44" fill="none" stroke="#cfe2f8" stroke-width="1.500"><path d="M20 8a10 10 0 0 0-6 18c1.500 1.500 2 3 2 5h8c0-2 .5-3.500 2-5a10 10 0 0 0-6-18zM16 35h8M17 39h6M20 12v8M2 20h5M33 20h5M7 6l4 4M33 6l-4 4M20 0v3"/></svg>
  </div>

  <!-- generate lintel dialog -->
  <div class="absolute left-[371px] top-[213px] w-[1113px] h-[565px] bg-[#efefef] shadow-[0_2px_8px_rgba(0,0,0,0.45)] flex flex-col">
    <div class="h-[33px] shrink-0 bg-[#2c7fe2] flex items-center justify-between pl-[11px] pr-[13px] text-[#d4e6fb]">生成过梁<svg class="w-[11px] h-[11px]" viewBox="0 0 11 11" stroke="#fff" stroke-width="1.800"><path d="M1 1l9 9M10 1l-9 9"/></svg></div>
    <div class="relative h-[474px] shrink-0 pl-[26px] pt-[25px]">
      <div class="w-[802px] h-[20px] flex items-center gap-[8px] font-bold text-[#222]">布置位置<div class="flex-1 h-px bg-[#c8c8c8]"></div></div>
      <div class="relative h-[18px] mt-[10px] flex items-center pl-[15px]">
        <span id="posChecks" class="flex items-center"></span>
      </div>
      <div class="w-[802px] h-[20px] mt-[10px] flex items-center gap-[16px] font-bold text-[#222]">布置条件（单位：mm）<div class="flex-1 h-px bg-[#c8c8c8]"></div></div>
      <div class="relative w-[814px] h-[214px] mt-[8px] bg-white overflow-hidden border-y-2 border-[#ccc]">
        <div id="ruleTable"></div>
        <div class="absolute left-[802px] top-[17px] w-[10px] h-[150px] rounded-full bg-[#c9c9c9]"></div>
      </div>
      <div class="w-[802px] flex mt-[6px] gap-[9px]">
        <button class="w-[99px] h-[32px] bg-white border border-[#ddd] rounded-[4px]">查看说明</button>
        <button class="ml-auto w-[99px] h-[32px] bg-white border border-[#ddd] rounded-[4px]">添加行</button>
        <button class="w-[98px] h-[32px] bg-white border border-[#ddd] rounded-[4px]">删除行</button>
      </div>
      <div class="w-[802px] h-[20px] mt-[9px] flex items-center gap-[8px] font-bold text-[#222]">生成方式<div class="flex-1 h-px bg-[#c8c8c8]"></div></div>
      <div class="h-[18px] mt-[9px] pl-[15px] flex items-center">
        <span class="w-[16px] h-[16px] rounded-full bg-white border border-[#aaa]"></span><span class="ml-[7px]">选择图元</span>
        <span class="ml-[136px] w-[16px] h-[16px] rounded-full bg-white border border-[#aaa] flex items-center justify-center"><span class="w-[8px] h-[8px] rounded-full bg-[#5aa4f5]"></span></span><span class="ml-[6px]">选择楼层</span>
      </div>
      <div class="h-[18px] mt-[11px] pl-[15px] flex items-center"><span class="w-[17px] h-[18px] rounded-[3px] bg-white border border-[#999]"></span><span class="ml-[3px]">覆盖同位置过梁</span></div>

      <!-- floor picker -->
      <div class="absolute left-[848px] top-[27px] w-[250px] h-[437px] bg-white border border-[#ccc] rounded-[3px] pt-[7px]">
        <div class="absolute left-[10px] -top-[13px] bg-[#efefef] px-[1px] h-[20px] flex items-center">选择楼层</div>
        <div id="floorTree"></div>
        <div class="absolute left-[24px] top-[415px] w-[195px] h-[10px] rounded-full bg-[#c9c9c9]"></div>
      </div>
    </div>
    <div class="h-px ml-[15px] mr-[15px] bg-[#d0d0d0] shrink-0"></div>
    <div class="flex justify-end gap-[8px] pr-[15px] pt-[10px]">
      <button class="w-[99px] h-[32px] rounded-[4px] bg-[#2c7fe2] text-[#d4e6fb]">确定</button>
      <button class="w-[100px] h-[32px] rounded-[4px] bg-white border border-[#ddd]">取消</button>
    </div>
  </div>

  <!-- app logo sits over title bar and tabs -->
  <div class="absolute left-0 top-0 w-[23px] h-[35px] bg-[#2f9df0] rounded-br-[6px] flex items-center justify-center text-white text-[30px] font-bold overflow-hidden">T</div>
  <div class="absolute left-[23px] top-[35px] w-0 h-0 border-l-[5px] border-l-transparent border-b-[5px] border-b-[#888]"></div>
</div>

<script>
  const tick = '<svg class="w-[12px] h-[12px]" viewBox="0 0 12 12" fill="none" stroke="#fff" stroke-width="2"><path d="M2 6l3 3 5-6"/></svg>';
  function box(state) {
    if (state === 1) return '<span class="w-[17px] h-[17px] shrink-0 rounded-[3px] bg-[#5ba5f6] flex items-center justify-center">' + tick + '</span>';
    if (state === 2) return '<span class="w-[17px] h-[17px] shrink-0 rounded-[3px] bg-white border border-[#999] flex items-center justify-center"><span class="w-[11px] h-[11px] rounded-[2px] bg-[#93c3f7]"></span></span>';
    return '<span class="w-[17px] h-[17px] shrink-0 rounded-[3px] bg-white border border-[#999]"></span>';
  }

  // navigation tree rows: [level, label, icon]
  const nav = [[0,'轴线'],[0,'柱'],[0,'墙'],[4,'门窗洞'],[1,'门(M)','door'],[1,'窗(C)','win'],[1,'门联窗(A)','doorwin'],[1,'墙洞(D)','hole'],[1,'带形窗(C)','band'],[1,'带形洞(D)','bandh'],[1,'飘窗(X)','bay'],[1,'老虎窗','house'],[2,'过梁(G)','lintel'],[1,'壁龛(I)','niche'],[4,'梁'],[1,'梁(L)','beam'],[1,'连梁(G)','link'],[1,'圈梁(E)','ring'],[0,'板'],[3,'装配式'],[0,'楼梯'],[0,'装修'],[0,'土方'],[0,'基础']];
  const navIcons = {
    door:'<rect x="3.500" y="1.500" width="13" height="17" fill="#dbe9f8" stroke="#4a8ed8" stroke-width="1.500"/><rect x="6" y="4" width="6" height="12" fill="#fff" stroke="#4a8ed8"/>',
    win:'<rect x="3.500" y="2.500" width="13" height="15" fill="#fff" stroke="#4a8ed8"/><path d="M10 3v14M4 9h12" stroke="#4a8ed8"/>',
    doorwin:'<rect x="0.500" y="3.500" width="11" height="15" fill="#dbe9f8" stroke="#4a8ed8"/><rect x="11.500" y="1.500" width="8" height="8" fill="#fff" stroke="#4a8ed8"/><path d="M15 2v7M12 5h7" stroke="#4a8ed8"/>',
    hole:'<rect x="0.500" y="2.500" width="19" height="15" fill="#ffcf60" stroke="#f5a623"/><rect x="6" y="7" width="9" height="10" fill="#fff" stroke="#f0752a"/>',
    band:'<rect x="0.500" y="4.500" width="19" height="11" fill="#dbe9f8" stroke="#4a8ed8" stroke-width="1.300"/><rect x="3" y="7" width="14" height="6" fill="#b8d4f2" stroke="#4a8ed8" stroke-width=".6"/>',
    bandh:'<rect x="0.500" y="4.500" width="19" height="11" fill="#fff" stroke="#4a8ed8" stroke-width="1.300"/><path d="M1 15L19 5v10z" fill="#a8c9ee"/>',
    bay:'<path d="M5 2v13h12" fill="none" stroke="#4a8ed8" stroke-width="1.300"/><rect x="3.500" y="14.500" width="14" height="3" fill="#dbe9f8" stroke="#4a8ed8"/>',
    house:'<path d="M1 9l9-7 9 7M3.500 8v10h13V8" fill="none" stroke="#999"/><rect x="7" y="10" width="6" height="5" fill="#dbe9f8" stroke="#4a8ed8"/>',
    lintel:'<rect x="1" y="2" width="18" height="4" fill="#4a8ed8"/><rect x="3.500" y="6.500" width="13" height="12" fill="#dbe9f8" stroke="#4a8ed8"/><path d="M5 15l6-5v5z" fill="#4a8ed8"/>',
    niche:'<rect x="3.500" y="2.500" width="13" height="16" fill="#dbe9f8" stroke="#4a8ed8"/><path d="M6 16V8l4-3 4 3v8z" fill="#fff" stroke="#4a8ed8"/>',
    beam:'<path d="M3 2h14l-4 6v10h-5V8z" fill="#dbe9f8" stroke="#4a8ed8"/><path d="M3 2l7 7 7-7" fill="none" stroke="#4a8ed8"/>',
    link:'<rect x="3" y="1" width="14" height="4" fill="#4a8ed8"/><rect x="3" y="5" width="3" height="14" fill="#999"/><rect x="14" y="5" width="3" height="14" fill="#999"/>',
    ring:'<path d="M5 3h14l-5 15H0z" fill="#dbe9f8" stroke="#4a8ed8" stroke-width="1.400"/><path d="M7 6h8l-3 9H4z" fill="#fff" stroke="#4a8ed8" stroke-width=".7"/>'
  };
  document.getElementById('navList').innerHTML = nav.map(r => {
    if (r[0] === 0) return '<div class="h-[30px] flex items-center pl-[7px]">' + r[1] + '</div>';
    if (r[0] === 4) return '<div class="h-[30px] flex items-center pl-[7px] relative"><span class="absolute left-0 top-[7px] w-[1px] h-[16px] bg-[#f9cf8e]"></span>' + r[1] + '</div>';
    if (r[0] === 3) return '<div class="h-[30px] flex items-center pl-[7px]">' + r[1] + '<span class="ml-[6px] w-[37px] h-[13px] bg-[#fbd35f] text-[9px] font-bold font-[Liberation_Serif] text-[#c8a030] flex items-center justify-center">VIP</span></div>';
    const sel = r[0] === 2 ? ' bg-[#c6daf3]' : '';
    return '<div class="h-[30px] flex items-center"><div class="ml-[28px] w-[102px] h-[26px] flex items-center pl-[4px]' + sel + '"><svg class="w-[20px] h-[20px] shrink-0" viewBox="0 0 20 20">' + navIcons[r[2]] + '</svg><span class="ml-[7px] whitespace-nowrap">' + r[1] + '</span></div></div>';
  }).join('');

  // property table
  const sup = c => '<span class="text-[11px] relative -top-[3px] mx-[1px]">' + c + '</span>';
  const props = [['名称','GL-5',0],['截面宽度(mm)','',0],['截面高度(mm)','400',0],['中心线距左墙...','(0)',1],['全部纵筋','',2],['上部纵筋','2' + sup('虫') + '12',0],['下部纵筋','3' + sup('虫') + '18',0],['箍筋',sup('中') + '8@150',0],['胶数','2',0],['材质','现浇混凝土',0],['混凝土类型','(砾石 GD40',0]];
  let propHtml = '<div class="grid grid-cols-[27px_126px_119px_50px] h-[26px] bg-[#f0f0f0] border-y-2 border-[#ddd] text-[#444]"><div class="border-r-2 border-[#ddd]"></div><div class="flex items-center justify-center border-r-2 border-[#ddd]">属性名称</div><div class="border-r-2 border-[#ddd]"></div><div></div></div>';
  props.forEach((p, i) => {
    const nameColor = p[2] === 1 ? 'text-[#333]' : 'text-[#2a6fdc]';
    const valBg = p[2] === 2 ? ' bg-[#ececec]' : '';
    propHtml += '<div class="grid grid-cols-[27px_126px_119px_50px] h-[26.2px] border-b-2 border-[#e4e4e4]"><div class="bg-[#f0f0f0] flex items-center justify-center border-r-2 border-[#ddd] text-[#555]">' + (i + 1) + '</div>'
      + '<div class="flex items-center pl-[4px] whitespace-nowrap border-r-2 border-[#e4e4e4] ' + nameColor + '">' + p[0] + '</div>'
      + '<div class="flex items-center pl-[4px] whitespace-nowrap border-r-2 border-[#e4e4e4]' + valBg + '">' + p[1] + '</div>'
      + '<div class="flex items-center justify-center border-r-2 border-[#e4e4e4]">' + box(0) + '</div></div>';
  });
  document.getElementById('propTable').innerHTML = propHtml;

  // placement checkboxes: [label, checked, gap before the next one]
  const pos = [['门',1,36],['窗',1,35],['门联窗',1,34],['墙洞',1,36],['壁龛',0,35],['飘窗',0,35],['带形窗',1,36],['带形洞',0,0]];
  document.getElementById('posChecks').innerHTML = pos.map(p =>
    '<span class="flex items-center" style="margin-right:' + p[2] + 'px">' + box(p[1]) + '<span class="ml-[3px]">' + p[0] + '</span></span>').join('');

  // lintel rule table
  const rules = [['190','0~2000','200','2C8','2C12','A6@150','2'],['190','2001~3000','200','2C10','3C12','A6@150','2'],['190','3001~4000','300','2C12','3C14','A6@150','2'],['190','4001~5000','350','2C14','3C16','A6@200','2'],['190','5001~6000','400','2C12','3C18','A8@150','2'],['190','6001~7000','450','2C14','3C20','A8@150','4'],['190','7001~8000','500','3C14','3C20','A8@150','4']];
  const ruleCols = 'grid grid-cols-[9px_109px_135px_76px_75px_89px_89px_132px_59px]';
  const heads = ['','墙厚（b）','洞宽（L）','过梁高','过梁宽','上部钢筋','下部钢筋','箍筋','胶数'];
  let ruleHtml = '<div class="w-[773px] h-[25px] bg-[#eeeeee] border-b-2 border-[#d8d8d8] ' + ruleCols + '">' + heads.map(h => '<div class="flex items-center justify-center border-r-2 border-[#ddd] text-[#555] whitespace-nowrap">' + h + '</div>').join('') + '</div>';
  rules.forEach((r, i) => {
    const bg = i % 2 ? ' bg-[#e9e8e6]' : ' bg-white';
    const vals = [r[0], r[1], r[2], '取墙厚', r[3], r[4], r[5], r[6]];
    ruleHtml += '<div class="w-[773px] h-[27.3px] border-b-2 border-[#e4e4e4] tracking-[0.3px] ' + ruleCols + bg + '"><div class="bg-[#e6e6e6] overflow-hidden flex items-center text-[14px] pt-[3px] border-r-2 border-[#ddd]">' + (i + 1) + '</div>'
      + vals.map(v => '<div class="flex items-center justify-center border-r-2 border-[#e0e0e0]">' + v + '</div>').join('') + '</div>';
  });
  document.getElementById('ruleTable').innerHTML = ruleHtml;

  // floor tree
  const tri = '<span class="w-0 h-0 border-l-[7px] border-l-transparent border-b-[7px] border-b-[#555]"></span>';
  let floors = '<div class="h-[30px] flex items-center pl-[16px]">' + tri + '<span class="ml-[15px]">' + box(2) + '</span><span class="ml-[9px]">全楼</span></div>'
    + '<div class="h-[30px] flex items-center pl-[41px]">' + tri + '<span class="ml-[15px]">' + box(2) + '</span><span class="ml-[8px]">行政后勤保障楼</span></div>';
  [['屋面层',1],['第6层',1],['第5层',1],['第4层（当前楼层）',1],['第3层',1],['第2层',1],['首层',1],['基础层',0]].forEach(f => {
    floors += '<div class="h-[30px] flex items-center pl-[87px]">' + box(f[1]) + '<span class="ml-[8px] whitespace-nowrap">' + f[0] + '</span></div>';
  });
  document.getElementById('floorTree').innerHTML = floors;

  // layer rows: [label, isGroup, checked]
  const layers = [['板',1,0],['现浇板',0,0],['螺旋板',0,0],['柱帽',0,0],['板洞',0,0],['板受力筋',0,0],['板负筋',0,0],['楼层板带',0,0],['板加腋',0,0],['楼梯',1,1],['楼梯',0,1],['直形梯段',0,1],['螺旋梯段',0,1],['楼梯井',0,1],['装修',1,1],['房间',0,1],['楼地面',0,1],['踢脚',0,1],['墙裙',0,1],['墙面',0,1],['天棚',0,1],['吊顶',0,1],['独立柱装修',0,1],['单梁装修',0,1]];
  document.getElementById('layerRows').innerHTML = layers.map((l, i) => {
    const isLast = i === 8 || i === 13 || i === 23;
    const guide = l[1]
      ? '<span class="absolute left-[16px] top-[5px] w-[16px] h-[16px] rounded-[3px] bg-white border border-[#aaa] flex items-center justify-center"><span class="w-[7px] h-[1.500px] bg-[#555]"></span></span><span class="ml-[39px]">' + l[0] + '</span>'
      : '<span class="absolute left-[23px] top-0 w-px ' + (isLast ? 'h-[13px]' : 'h-[27px]') + ' bg-[#e0e0e0]"></span><span class="absolute left-[23px] top-[12px] w-[21px] h-px bg-[#e0e0e0]"></span><span class="ml-[52px]">' + l[0] + '</span>';
    return '<div class="grid grid-cols-[152px_79px_55px] h-[26.25px] border-b-2 border-[#e6e6e6]"><div class="relative flex items-center border-r-2 border-[#e6e6e6]"><span class="absolute left-[11px] top-0 w-px h-full bg-[#e8e8e8]"></span>' + guide + '</div><div class="flex items-center justify-center border-r-2 border-[#e6e6e6]">' + box(l[2]) + '</div><div class="flex items-center pl-[30px]">' + box(0) + '</div></div>';
  }).join('');

  // CAD dimension labels: [x centre, y baseline, text, width]
  const cadText = [
    [808,827,'FM 甲 1521',56],[926,825,'FM 丙 0818',56],[1230,827,'FM 乙 1521',56],[1347,819,'M1021',30],[1459,823,'M1021',30],
    [851,837,'100',18],[905,837,'100',18],[966,837,'300',18],[1137,837,'300',18],[1318,837,'300',18],[1426,837,'200',18],
    [730,855,'1050',24],[794,855,'1500',24],[846,855,'450',18],[881,855,'800',18],[930,855,'1000',24],[975,855,'100',18],[1051,855,'3000',24],[1168,855,'950',18],[1228,855,'1500',24],[1289,855,'850',18],[1349,855,'1000',24],[1399,855,'900',18],[1455,855,'1000',24],[1496,855,'600',18],[1530,855,'700',18],
    [652,909,'M1021',30],[738,909,'M1021',30],[1090,909,'M1021',30],[1176,909,'M1021',30],[1459,909,'M1021',30],
    [1510,428,'0',7]
  ];
  document.getElementById('cadText').innerHTML = cadText.map(t =>
    '<text x="' + (t[0] - t[3] / 2) + '" y="' + t[1] + '" font-size="16" textLength="' + t[3] + '" lengthAdjust="spacingAndGlyphs" font-family="Liberation Sans, Noto Sans CJK SC">' + t[2] + '</text>').join('');
</script>
</body>
</html>
